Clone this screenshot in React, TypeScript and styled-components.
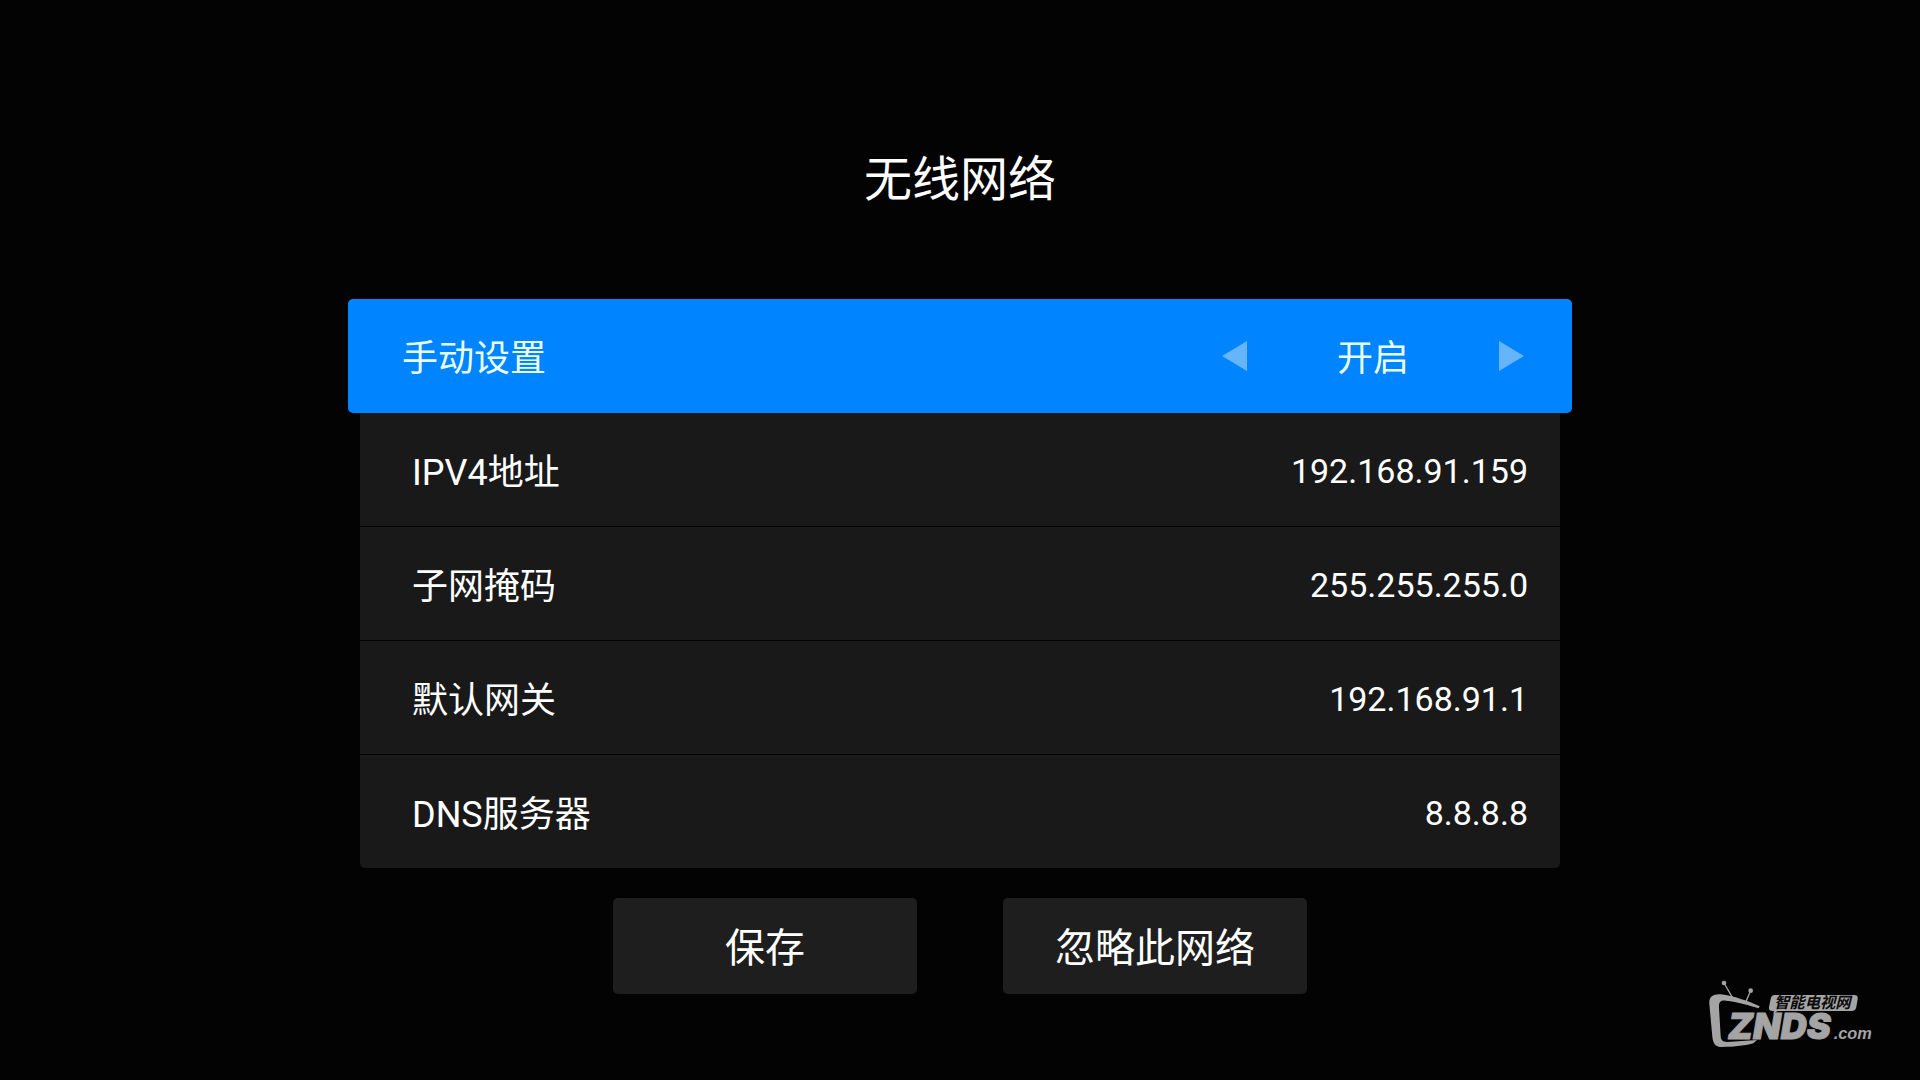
import React, { useState } from "react";
import styled, { createGlobalStyle } from "styled-components";

const GlobalStyle = createGlobalStyle`
  *, *::before, *::after {
    box-sizing: border-box;
  }
  body {
    margin: 0;
    background: #030303;
    color: #ffffff;
    font-family: Roboto, "Noto Sans CJK SC", sans-serif;
  }
  button, input {
    font: inherit;
    color: inherit;
    border: 0;
    margin: 0;
  }
`;

const Screen = styled.main`
  min-height: 100vh;
  padding: 144px 24px 48px;
  display: flex;
  flex-direction: column;
  align-items: center;
`;

const Title = styled.h1`
  margin: 0 0 83px;
  font-size: 48px;
  line-height: 72px;
  font-weight: 400;
`;

const Form = styled.form`
  width: 100%;
  max-width: 1200px;
`;

const ModeRow = styled.div`
  height: 114px;
  margin: 0 -12px;
  padding: 0 36px 0 54px;
  display: flex;
  align-items: center;
  justify-content: space-between;
  border-radius: 5px;
  background: #0084ff;
  color: #e8ffff;
  font-size: 36px;
  line-height: 54px;
`;

const ModeLabel = styled.span`
  padding-top: 6px;
`;

const ModeValue = styled.output`
  padding-top: 6px;
`;

const Stepper = styled.div`
  width: 326px;
  display: flex;
  align-items: center;
  justify-content: space-between;
`;

const StepButton = styled.button`
  width: 48px;
  height: 48px;
  padding: 0;
  display: flex;
  align-items: center;
  justify-content: center;
  background: transparent;
`;

const Fields = styled.div`
  overflow: hidden;
  border-radius: 0 0 5px 5px;
  background: #191919;
`;

const FieldRow = styled.div`
  height: 114px;
  padding: 0 32px 0 52px;
  display: flex;
  align-items: center;
  justify-content: space-between;
  border-bottom: 1px solid #030303;

  &:last-child {
    height: 113px;
    border-bottom: 0;
  }
`;

const FieldLabel = styled.label`
  padding-top: 6px;
  font-size: 36px;
  line-height: 54px;
`;

const FieldInput = styled.input`
  width: 50%;
  height: 56px;
  padding: 2px 0 0;
  background: transparent;
  text-align: right;
  font-size: 34px;
  line-height: 54px;
  outline: none;
`;

const Actions = styled.div`
  margin-top: 30px;
  display: flex;
  justify-content: center;
  gap: 86px;
`;

const ActionButton = styled.button`
  width: 304px;
  height: 96px;
  padding: 6px 0 0;
  border-radius: 5px;
  background: #1e1e1e;
  font-size: 40px;
  line-height: 60px;
`;

const Watermark = styled.svg`
  position: absolute;
  right: 46px;
  bottom: 32px;
  width: 168px;
  height: 70px;
`;

const fields = [
  { id: "ip", label: "IPV4地址", value: "192.168.91.159" },
  { id: "mask", label: "子网掩码", value: "255.255.255.0" },
  { id: "gateway", label: "默认网关", value: "192.168.91.1" },
  { id: "dns", label: "DNS服务器", value: "8.8.8.8" },
];

function Arrow({ direction }: { direction: "left" | "right" }) {
  const points = direction === "left" ? "0,15 25,0 25,30" : "25,15 0,0 0,30";
  return (
    <svg width="25" height="30" viewBox="0 0 25 30" aria-hidden="true">
      <polygon points={points} fill="#66b5fa" />
    </svg>
  );
}

function ZndsLogo() {
  return (
    <Watermark viewBox="48 54 504 210" role="img" aria-label="ZNDS.com 智能电视网">
      <g fill="#a4a4a4">
        <path d="M209 139 C174 123 132 108 92 103 C69 101 56 111 58 132 L67 230 C69 252 78 261 96 261 C134 261 171 256 190 250 L201 240 L111 246 C98 246 93 241 92 229 L87 143 C86 126 92 120 108 122 C143 126 179 136 206 145 Z" />
        <circle cx="102" cy="69" r="7" />
        <circle cx="182" cy="92" r="7" />
        <path d="M102 69 L127 112 M182 92 L166 129" stroke="#a4a4a4" strokeWidth="4" />
        <path d="M254 105 H493 Q505 105 503 117 L499 141 Q497 153 485 153 H263 L250 161 L252 153 H247 Q235 153 237 141 L242 117 Q244 105 254 105 Z" />
        <text
          x="114"
          y="237"
          fontFamily="Inter, sans-serif"
          fontWeight="900"
          fontStyle="italic"
          fontSize="108"
          stroke="#a4a4a4"
          strokeWidth="3"
        >
          ZNDS
        </text>
        <text
          x="431"
          y="236"
          fontFamily="Liberation Sans, sans-serif"
          fontWeight="700"
          fontStyle="italic"
          fontSize="49"
        >
          .com
        </text>
      </g>
      <text
        x="252"
        y="145"
        fill="#0b0b0b"
        fontFamily="Noto Sans CJK SC, sans-serif"
        fontWeight="700"
        fontStyle="italic"
        fontSize="46"
      >
        智能电视网
      </text>
    </Watermark>
  );
}

export default function App() {
  const [manual, setManual] = useState(true);
  const toggle = () => setManual((on) => !on);

  return (
    <>
      <GlobalStyle />
      <Screen>
        <Title>无线网络</Title>
        <Form onSubmit={(event: React.FormEvent) => event.preventDefault()}>
          <ModeRow>
            <ModeLabel>手动设置</ModeLabel>
            <Stepper>
              <StepButton type="button" aria-label="上一个选项" onClick={toggle}>
                <Arrow direction="left" />
              </StepButton>
              <ModeValue>{manual ? "开启" : "关闭"}</ModeValue>
              <StepButton type="button" aria-label="下一个选项" onClick={toggle}>
                <Arrow direction="right" />
              </StepButton>
            </Stepper>
          </ModeRow>
          <Fields>
            {fields.map((field) => (
              <FieldRow key={field.id}>
                <FieldLabel htmlFor={field.id}>{field.label}</FieldLabel>
                <FieldInput id={field.id} type="text" defaultValue={field.value} />
              </FieldRow>
            ))}
          </Fields>
          <Actions>
            <ActionButton type="submit">保存</ActionButton>
            <ActionButton type="button">忽略此网络</ActionButton>
          </Actions>
        </Form>
      </Screen>
      <ZndsLogo />
    </>
  );
}
